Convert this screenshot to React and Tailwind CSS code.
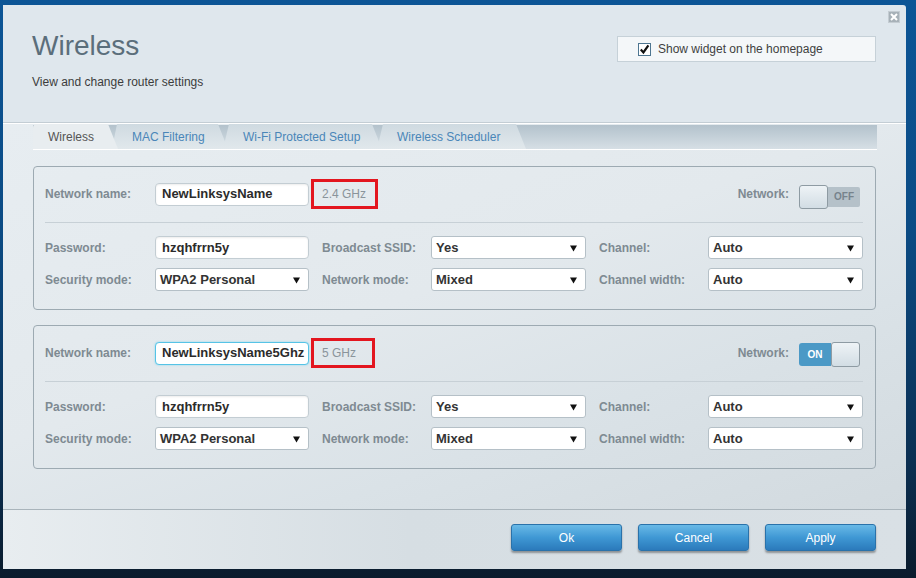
import React from "react";

// small black dropdown arrow
const Caret = () => (
  <svg width="7" height="8" viewBox="0 0 7 8">
    <path d="M0 1.5h7L3.5 7.5z" fill="#111" />
  </svg>
);

function Label({ className = "", children }) {
  return (
    <div className={`shrink-0 text-[12px] font-bold text-[#7e8a92] ${className}`}>{children}</div>
  );
}

function TextInput({ value, focus }) {
  return (
    <div
      className={`flex h-[23px] w-[154px] shrink-0 items-center rounded-[4px] border bg-white pl-[6px] text-[13px] font-bold text-[#2b2b2b] ${
        focus ? "border-[#56c3e6] shadow-[0_0_2px_#7fd3ee]" : "border-[#c3cdd3] shadow-[inset_0_1px_2px_rgba(0,0,0,0.08)]"
      }`}
    >
      {value}
    </div>
  );
}

function Select({ value, className = "" }) {
  return (
    <div
      className={`flex h-[23px] items-center justify-between rounded-[3px] border border-[#b5c0c7] bg-white pl-[4px] pr-[8px] text-[13px] font-bold text-[#333] ${className}`}
    >
      <span>{value}</span>
      <Caret />
    </div>
  );
}

function Toggle({ on }) {
  if (on) {
    return (
      <div className="mt-[3px] flex h-[25px] w-[61px] items-center">
        <div className="flex h-[23px] w-[32px] items-center justify-center rounded-l-[3px] bg-[#4b99c6] text-[10px] font-bold text-white">
          ON
        </div>
        <div className="h-[25px] flex-1 rounded-[3px] border border-[#8e9ba3] bg-gradient-to-b from-[#eef3f6] to-[#d2dde4]" />
      </div>
    );
  }
  return (
    <div className="mt-[5px] flex h-[24px] w-[61px] items-center">
      <div className="h-[24px] w-[29px] rounded-[3px] border border-[#8e9ba3] bg-gradient-to-b from-[#eef3f6] to-[#d2dde4]" />
      <div className="flex h-[20px] flex-1 items-center justify-center rounded-r-[2px] bg-[#b5c1c9] text-[10px] font-bold text-[#77838c]">
        OFF
      </div>
    </div>
  );
}

function Band({ name, band, bandW, on, focus, mt }) {
  return (
    <div className={`rounded-[4px] border border-[#9daab2] pb-[18px] pl-[11px] pr-[12px] pt-[12px] ${mt}`}>
      <div className="flex h-[30px] items-center">
        <Label className="w-[110px]">Network name:</Label>
        <TextInput value={name} focus={focus} />
        <div
          className={`ml-[2px] flex h-[30px] items-center border-[3px] border-[#e3161f] pl-[8px] text-[12px] text-[#8a949b] ${bandW}`}
        >
          {band}
        </div>
        <div className="flex-1" />
        <Label className="mr-[10px]">Network:</Label>
        <div className="mr-[3px]">
          <Toggle on={on} />
        </div>
      </div>
      <div className="mt-[13px] h-px bg-[#c7d0d6]" />
      <div className="mt-[13px] flex h-[23px] items-center">
        <Label className="w-[110px]">Password:</Label>
        <TextInput value="hzqhfrrn5y" />
        <Label className="ml-[13px] w-[109px]">Broadcast SSID:</Label>
        <Select value="Yes" className="w-[155px]" />
        <Label className="ml-[13px] w-[109px]">Channel:</Label>
        <Select value="Auto" className="flex-1" />
      </div>
      <div className="mt-[9px] flex h-[23px] items-center">
        <Label className="w-[110px]">Security mode:</Label>
        <Select value="WPA2 Personal" className="w-[154px]" />
        <Label className="ml-[13px] w-[109px]">Network mode:</Label>
        <Select value="Mixed" className="w-[155px]" />
        <Label className="ml-[13px] w-[109px]">Channel width:</Label>
        <Select value="Auto" className="flex-1" />
      </div>
    </div>
  );
}

const tabs = [
  { label: "Wireless", w: "w-[85px]", ml: "", clip: "[clip-path:polygon(0_100%,0_0,calc(100%-10px)_0,100%_100%)]", z: "z-[5]" },
  { label: "MAC Filtering", w: "w-[116px]", ml: "-ml-[6px]", clip: "[clip-path:polygon(0_100%,5px_0,calc(100%-10px)_0,100%_100%)]", z: "z-[3]" },
  { label: "Wi-Fi Protected Setup", w: "w-[159px]", ml: "-ml-[5px]", clip: "[clip-path:polygon(0_100%,6px_0,calc(100%-10px)_0,100%_100%)]", z: "z-[2]" },
  { label: "Wireless Scheduler", w: "w-[149px]", ml: "-ml-[5px]", clip: "[clip-path:polygon(0_100%,6px_0,calc(100%-10px)_0,100%_100%)]", z: "z-[1]" },
];

export default function App() {
  return (
    <div className="h-[578px] w-[916px] overflow-hidden bg-[linear-gradient(180deg,#0c5596_0%,#0b4b84_40%,#0b2f52_80%,#0a1b2c_100%)] pl-[3px] pt-[5px] font-['Liberation_Sans',Arial,sans-serif]">
      <div className="relative flex h-[564px] w-[903px] flex-col overflow-hidden rounded-tr-[3px] bg-[#dfe7ed]">
        {/* close */}
        <div className="absolute right-[6px] top-[6px]">
          <svg width="12" height="12" viewBox="0 0 12 12">
            <rect x="0.5" y="0.5" width="11" height="11" fill="#a7b1b8" stroke="#c4ccd2" />
            <path d="M3 3l6 6M9 3l-6 6" stroke="#fff" strokeWidth="2" />
          </svg>
        </div>

        {/* header */}
        <div className="flex h-[118px] shrink-0 items-start justify-between border-b border-[#c3cdd4] pl-[29px] pr-[30px] pt-[25px]">
          <div>
            <h1 className="text-[28px] font-normal leading-[32px] text-[#5b6e7b]">Wireless</h1>
            <p className="mt-[12px] text-[12px] leading-[16px] text-[#3c3c3c]">View and change router settings</p>
          </div>
          <div className="mt-[6px] flex h-[26px] w-[259px] items-center gap-[7px] border border-[#c6d1d8] bg-[#f4f7f9] pl-[20px] text-[12px] text-[#3f3f3f]">
            <svg width="13" height="13" viewBox="0 0 13 13">
              <rect x="0.5" y="0.5" width="12" height="12" fill="#fff" stroke="#4e7691" />
              <path d="M2.8 6.6l2.6 2.8 5-7" fill="none" stroke="#111" strokeWidth="2.2" />
            </svg>
            Show widget on the homepage
          </div>
        </div>

        {/* content */}
        <div className="flex-1 border-t border-white bg-[linear-gradient(160deg,#e7edf1_0%,#e3e9ed_45%,#dae2e7_70%,#d2dadf_100%)] px-[30px] pt-px">
          <div className="flex h-[25px] w-[844px] items-end border-b border-white bg-gradient-to-b from-[#b3c2cc] to-[#d6dfe5]">
            {tabs.map((t, i) => (
              <div
                key={t.label}
                className={`relative flex h-[25px] shrink-0 items-center text-[12px] ${t.w} ${t.ml} ${t.clip} ${t.z} ${
                  i === 0
                    ? "rounded-tl-[4px] bg-[#e8edf0] pl-[15px] text-[#555]"
                    : "bg-gradient-to-b from-[#cfdae1] to-[#e1e8ec] pl-[20px] text-[#4a86b8]"
                }`}
              >
                {t.label}
              </div>
            ))}
          </div>

          <Band name="NewLinksysName" band="2.4 GHz" bandW="w-[67px]" on={false} mt="mt-[16px]" />
          <Band name="NewLinksysName5Ghz" band="5 GHz" bandW="w-[64px]" on focus mt="mt-[15px]" />
        </div>

        {/* footer */}
        <div className="flex h-[60px] shrink-0 items-start justify-end gap-[16px] border-t border-[#a9b4bb] bg-[linear-gradient(90deg,#e8edf0_0%,#d6dee3_45%,#d9e0e5_100%)] pr-[30px] pt-[14px]">
          {["Ok", "Cancel", "Apply"].map((b) => (
            <button
              key={b}
              className="h-[27px] w-[111px] rounded-[3px] border border-[#2a72aa] bg-gradient-to-b from-[#68b9e7] via-[#3f98d4] to-[#2b7abb] font-['Liberation_Sans_Narrow','Liberation_Sans',sans-serif] text-[12px] text-white shadow-[0_2px_2px_rgba(0,0,0,0.35)]"
            >
              {b}
            </button>
          ))}
        </div>
      </div>
    </div>
  );
}
